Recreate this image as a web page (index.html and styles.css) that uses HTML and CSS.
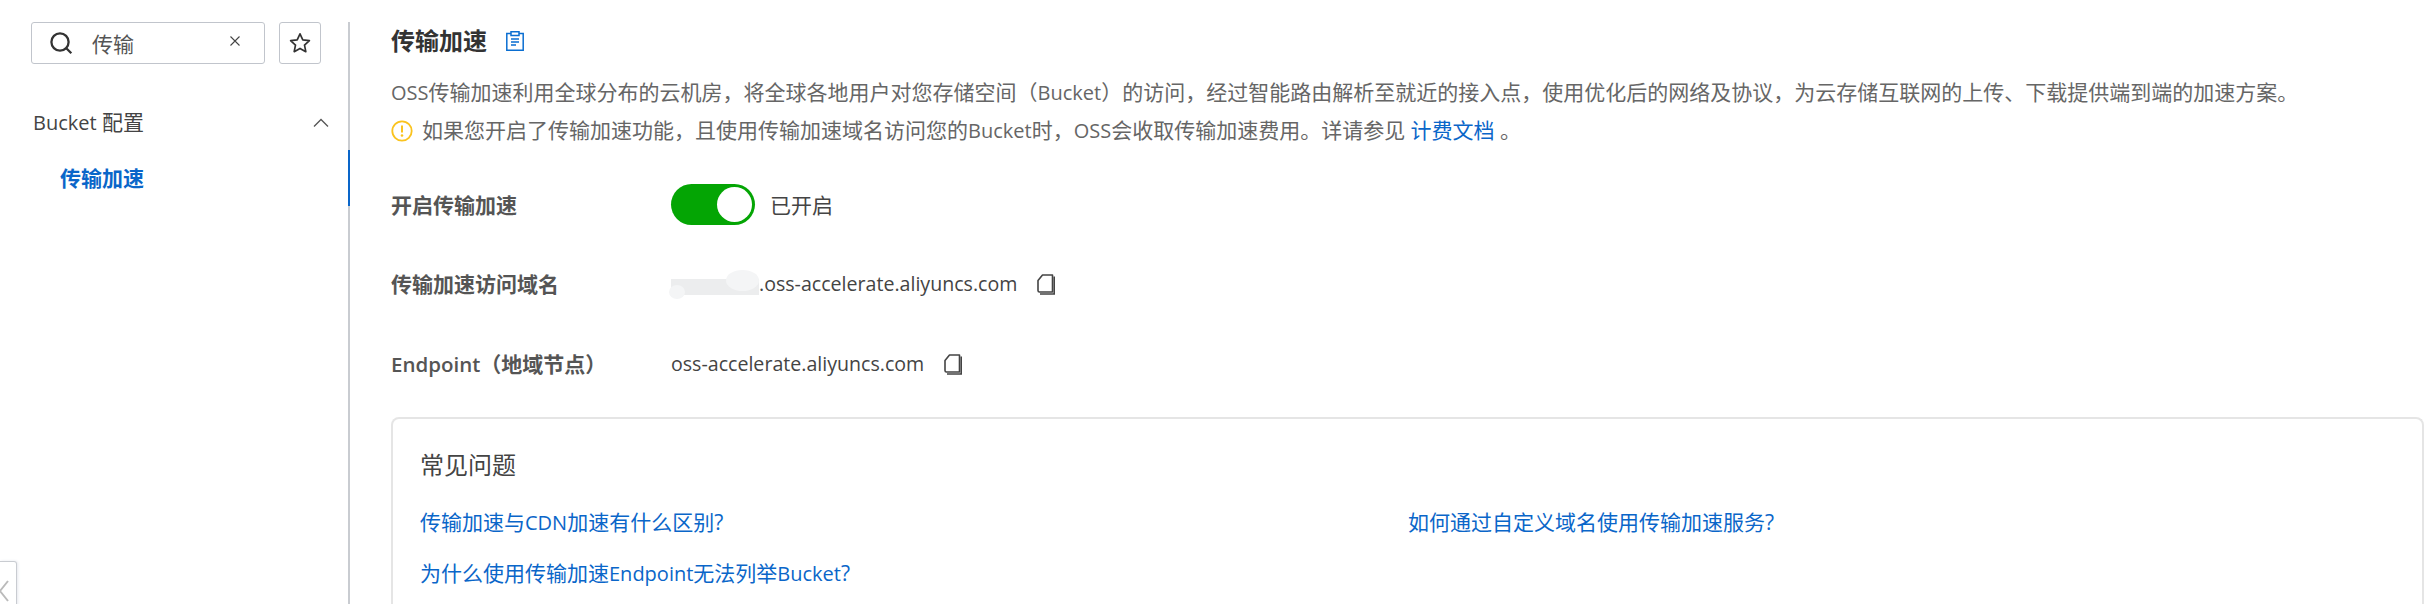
FILE: index.html
```html
<!DOCTYPE html>
<html lang="zh-CN">
<head>
<meta charset="utf-8">
<title>传输加速</title>
<link rel="stylesheet" href="styles.css">
</head>
<body>
<div class="layout">
  <aside class="sidebar">
    <div class="search-row">
      <div class="search">
        <svg class="search-icon" viewBox="0 0 24 24" width="24" height="24"><circle cx="11" cy="11" r="8.600" fill="none" stroke="#333" stroke-width="2.300"/><path d="M17.300 17.300l5 5" stroke="#333" stroke-width="2.300" fill="none"/></svg>
        <span class="search-text">传输</span>
        <svg class="clear-icon" viewBox="0 0 10 10" width="10" height="10"><path d="M.5.5l9 9M9.5.5l-9 9" stroke="#444" stroke-width="1.100" fill="none"/></svg>
      </div>
      <button class="star-btn"><svg viewBox="0 0 24 24" width="24" height="24"><path d="M12 2.800l2.800 6.100 6.600.8-4.900 4.500 1.300 6.500L12 17.400l-5.800 3.300 1.300-6.500-4.900-4.500 6.600-.8z" fill="none" stroke="#333" stroke-width="1.700" stroke-linejoin="round"/></svg></button>
    </div>
    <div class="group">
      <span><span class="en">Bucket</span> 配置</span>
      <svg viewBox="0 0 16 10" width="16" height="10"><path d="M1 8.500l7-7 7 7" fill="none" stroke="#555" stroke-width="1.300"/></svg>
    </div>
    <div class="nav-item">传输加速</div>
    <div class="collapse"><svg viewBox="0 0 10 24" width="10" height="24"><path d="M8 1l-8 10 8 10" fill="none" stroke="#bbb" stroke-width="2"/></svg></div>
  </aside>
  <main class="main">
    <h1 class="title">传输加速
      <svg class="doc-icon" viewBox="0 0 18 20" width="18" height="20"><path d="M5 2.500H.8v16.700h16.400V2.500H13M5 .8h8v3.600H5zM5 8h8M5 11h8M5 14h5" fill="none" stroke="#0a6ed1" stroke-width="1.500"/></svg>
    </h1>
    <p class="desc"><span class="en">OSS</span>传输加速利用全球分布的云机房，将全球各地用户对您存储空间（<span class="en">Bucket</span>）的访问，经过智能路由解析至就近的接入点，使用优化后的网络及协议，为云存储互联网的上传、下载提供端到端的加速方案。</p>
    <p class="notice">
      <svg viewBox="0 0 22 22" width="22" height="22"><circle cx="11" cy="11" r="9.700" fill="none" stroke="#fac31e" stroke-width="1.800"/><path d="M11 5.500v7" stroke="#fac31e" stroke-width="2"/><circle cx="11" cy="15.500" r="1.300" fill="#fac31e"/></svg>
      <span>如果您开启了传输加速功能，且使用传输加速域名访问您的<span class="en">Bucket</span>时，<span class="en">OSS</span>会收取传输加速费用。详请参见 <a class="link" href="#">计费文档</a> 。</span>
    </p>
    <div class="row row-switch">
      <div class="label">开启传输加速</div>
      <div class="value">
        <span class="switch"><span class="knob"></span></span>
        <span class="state">已开启</span>
      </div>
    </div>
    <div class="row row-domain">
      <div class="label">传输加速访问域名</div>
      <div class="value">
        <span class="blur"><i class="blob b1"></i><i class="blob b2"></i></span><span class="url">.oss-accelerate.aliyuncs.com</span>
        <svg class="copy" viewBox="0 0 18 21" width="18" height="21"><path d="M1 6.500L5.500 1H15.500V18H2.500Q1 18 1 16.500Z" fill="none" stroke="#444" stroke-width="1.600" stroke-linejoin="round"/><path d="M17.200 2.500V20H3" fill="none" stroke="#444" stroke-width="1.600"/></svg>
      </div>
    </div>
    <div class="row row-endpoint">
      <div class="label"><span class="en">Endpoint</span>（地域节点）</div>
      <div class="value">
        <span class="url">oss-accelerate.aliyuncs.com</span>
        <svg class="copy" viewBox="0 0 18 21" width="18" height="21"><path d="M1 6.500L5.500 1H15.500V18H2.500Q1 18 1 16.500Z" fill="none" stroke="#444" stroke-width="1.600" stroke-linejoin="round"/><path d="M17.200 2.500V20H3" fill="none" stroke="#444" stroke-width="1.600"/></svg>
      </div>
    </div>
    <section class="faq">
      <h2 class="faq-title">常见问题</h2>
      <div class="faq-grid">
        <a class="link" href="#">传输加速与<span class="en">CDN</span>加速有什么区别?</a>
        <a class="link" href="#">如何通过自定义域名使用传输加速服务?</a>
        <a class="link" href="#">为什么使用传输加速<span class="en">Endpoint</span>无法列举<span class="en">Bucket</span>?</a>
      </div>
    </section>
  </main>
</div>
</body>
</html>
```
FILE: styles.css
```css
* { box-sizing: border-box; }
html, body { margin: 0; height: 100%; overflow: hidden; background: #fff; }
body { font-family: "Open Sans", "Noto Sans CJK SC", sans-serif; color: #333; font-size: 21px; }
.en { font-size: 20px; }
.url { font-size: 19.600px; }
.layout { display: flex; height: 604px; padding-top: 22px; }
.sidebar { position: relative; width: 350px; flex: none; border-right: 2px solid #c9ccd1; padding-left: 31px; }
.search-row { display: flex; gap: 14px; width: 290px; }
.search { width: 234px; height: 42px; border: 1px solid #c1c5cc; border-radius: 3px; display: flex; align-items: center; padding-left: 17px; }
.search-text { margin-left: 19px; font-size: 21px; color: #555; flex: 1; }
.clear-icon { margin-right: 24px; margin-top: -4px; }
.star-btn { width: 42px; height: 42px; padding: 0; border: 1px solid #c1c5cc; border-radius: 3px; background: #fff; display: flex; align-items: center; justify-content: center; }
.group { margin-top: 43px; width: 298px; display: flex; justify-content: space-between; align-items: center; font-size: 21px; color: #444; line-height: 30px; padding-left: 2px; }
.nav-item { position: relative; margin: 12px -2px 0 -31px; height: 56px; line-height: 56px; padding-left: 60px; color: #0a66c9; font-weight: 700; font-size: 21px; }
.nav-item::after { content: ""; position: absolute; right: 0; top: 0; width: 2px; height: 56px; background: #0a66c9; }
.collapse { position: absolute; left: 0; top: 539px; width: 17px; height: 50px; border: 1px solid #c9ccd1; border-left: 0; border-radius: 0 3px 0 0; box-shadow: 1px 0 3px #e6e8ee; padding: 18px 0 0 0; }
.main { flex: 1; min-width: 0; padding: 0 0 0 41px; }
.title { margin: 0; display: flex; align-items: center; gap: 19px; height: 38px; font-size: 24px; font-weight: 700; color: #333; line-height: 38px; }
.desc { margin: 17px 0 0; line-height: 30px; color: #666; white-space: nowrap; }
.notice { margin: 7px 0 0; display: flex; align-items: center; gap: 9px; line-height: 30px; color: #666; white-space: nowrap; }
.link { color: #0a66c9; text-decoration: none; }
.row { display: flex; align-items: center; line-height: 30px; }
.label { width: 280px; flex: none; font-weight: 700; color: #555; }
.label .en { font-weight: 600; font-size: 20.500px; }
.value { display: flex; align-items: center; color: #444; }
.row-switch { margin-top: 38px; height: 41px; }
.row-domain { margin-top: 39px; height: 40px; }
.row-endpoint { margin-top: 40px; height: 40px; }
.switch { width: 84px; height: 41px; border-radius: 21px; background: #04a504; position: relative; display: block; }
.knob { position: absolute; right: 3px; top: 3px; width: 35px; height: 35px; border-radius: 50%; background: #fff; }
.state { margin-left: 15px; }
.blur { position: relative; display: block; width: 88px; height: 16px; margin-top: 6px; background: #ecedee; }
.blob { position: absolute; display: block; border-radius: 50%; background: #f4f5f6; }
.b1 { left: 55px; top: -9px; width: 33px; height: 21px; }
.b2 { left: -2px; top: 6px; width: 16px; height: 14px; }
.copy { margin-left: 20px; }
.faq { margin-top: 33px; margin-right: 2px; height: 188px; border: 2px solid #e5e5e5; border-bottom: 0; border-radius: 8px 8px 0 0; padding: 29px 27px 0; }
.faq-title { margin: 0; font-size: 24px; font-weight: 400; line-height: 34px; color: #444; }
.faq-grid { margin-top: 25px; display: grid; grid-template-columns: 988px 1fr; row-gap: 20px; line-height: 30px; }
```
